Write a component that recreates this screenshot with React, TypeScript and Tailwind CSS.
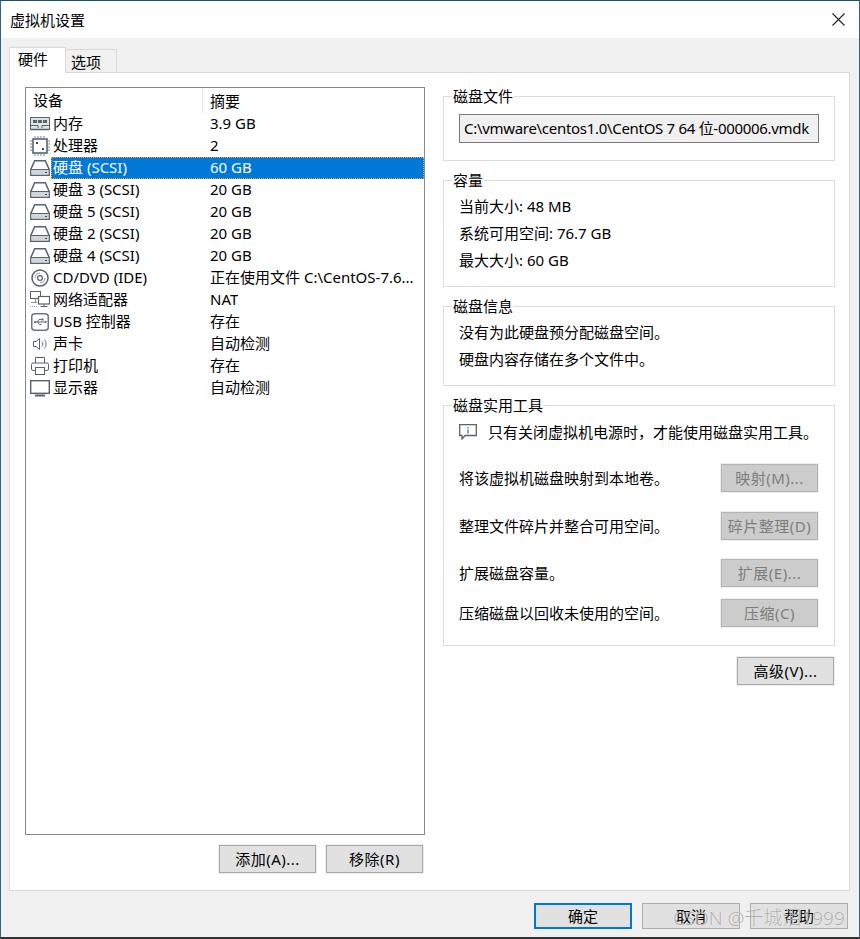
import React from 'react';

const font = "font-['Noto_Sans','Noto_Sans_CJK_SC',sans-serif]";

const MemoryIcon = () => (
    <svg width="20" height="14" viewBox="0 0 20 14" fill="none">
        <rect x="0.5" y="0.5" width="19" height="12" fill="#dfe3e6" stroke="#56646e" />
        <rect x="3" y="3" width="4" height="3" fill="#56646e" />
        <rect x="8" y="3" width="4" height="3" fill="#56646e" />
        <rect x="13" y="3" width="4" height="3" fill="#56646e" />
        <path d="M1 8.5H8V11M12 11V8.5H19" stroke="#56646e" />
        <path d="M1 12.5H19" stroke="#56646e" strokeWidth="1.5" />
    </svg>
);

const CpuIcon = () => (
    <svg width="20" height="20" viewBox="0 0 20 20" fill="none">
        <rect x="3" y="3" width="14" height="14" fill="#fff" stroke="#56646e" strokeWidth="1.6" />
        <path
            d="M5 0V2.5M8 0V2.5M11 0V2.5M14 0V2.5M5 17.5V20M8 17.5V20M11 17.5V20M14 17.5V20M0 5H2.5M0 8H2.5M0 11H2.5M0 14H2.5M17.5 5H20M17.5 8H20M17.5 11H20M17.5 14H20"
            stroke="#7a858e"
        />
        <rect x="6" y="6" width="2" height="2" fill="#3f4a54" />
        <rect x="12" y="12" width="2" height="2" fill="#3f4a54" />
    </svg>
);

const DiskIcon = () => (
    <svg width="20" height="16" viewBox="0 0 20 16" fill="none">
        <path d="M4.7 0.8H15.3L19.2 9.5V15.2H0.8V9.5Z" fill="#fff" stroke="#56646e" strokeWidth="1.5" />
        <rect x="1.5" y="10" width="17" height="4.5" fill="#cfd5da" />
        <path d="M1 9.5H19" stroke="#56646e" />
        <rect x="15" y="12" width="2" height="1" fill="#3f4a54" />
    </svg>
);

const CdIcon = () => (
    <svg width="18" height="18" viewBox="0 0 18 18" fill="none">
        <circle cx="9" cy="9" r="8" fill="#fff" stroke="#56646e" strokeWidth="1.5" />
        <circle cx="9" cy="9" r="2.4" stroke="#56646e" strokeWidth="1.2" />
        <path d="M4 9a5 5 0 0 1 5-5" stroke="#8f99a1" />
        <path d="M14 9a5 5 0 0 1-5 5" stroke="#8f99a1" />
    </svg>
);

const NetworkIcon = () => (
    <svg width="20" height="18" viewBox="0 0 20 18" fill="none">
        <rect x="0.5" y="0.5" width="10" height="7" fill="#fff" stroke="#56646e" />
        <rect x="8.5" y="5.5" width="11" height="7.5" fill="#fff" stroke="#56646e" strokeWidth="1.2" />
        <path d="M14 13V15M10.5 15.5H17.5" stroke="#56646e" />
        <path d="M5.5 8V11M1 11.5H7" stroke="#8a949c" />
        <path d="M0 15.5H8" stroke="#8a949c" strokeDasharray="1 1" />
    </svg>
);

const UsbIcon = () => (
    <svg width="18" height="18" viewBox="0 0 18 18" fill="none">
        <rect x="0.75" y="0.75" width="16.5" height="16.5" rx="3" fill="#fff" stroke="#6b7680" strokeWidth="1.5" />
        <path d="M3.5 9H14M6 9L8 6.5H10.5M6.5 9L8.5 11.5H10.5" stroke="#56646e" />
        <circle cx="4" cy="9" r="1" fill="#56646e" />
        <rect x="10.5" y="5.5" width="2" height="2" fill="#56646e" />
        <path d="M14 7.5V10.5L16 9Z" fill="#56646e" />
    </svg>
);

const SoundIcon = () => (
    <svg width="16" height="14" viewBox="0 0 16 14" fill="none">
        <path d="M1.5 4.5H4L7.5 1.5V12.5L4 9.5H1.5Z" fill="#fff" stroke="#56646e" />
        <path d="M10 4.5C11 6 11 8 10 9.5M12.5 2.5C14.5 5 14.5 9 12.5 11.5" stroke="#6b7680" />
    </svg>
);

const PrinterIcon = () => (
    <svg width="18" height="18" viewBox="0 0 18 18" fill="none">
        <path d="M4.5 6V0.5H13.5V6" fill="#fff" stroke="#56646e" />
        <rect x="0.5" y="6" width="17" height="7.5" rx="1.5" fill="#fff" stroke="#56646e" />
        <rect x="4.5" y="10.5" width="9" height="7" fill="#fff" stroke="#56646e" />
    </svg>
);

const MonitorIcon = () => (
    <svg width="20" height="17" viewBox="0 0 20 17" fill="none">
        <rect x="0.7" y="0.7" width="18.6" height="12.6" fill="#fff" stroke="#56646e" strokeWidth="1.4" />
        <path d="M5 15.5H15" stroke="#56646e" strokeWidth="2" />
    </svg>
);

const devices = [
    { icon: <MemoryIcon />, name: '内存', summary: '3.9 GB' },
    { icon: <CpuIcon />, name: '处理器', summary: '2' },
    { icon: <DiskIcon />, name: '硬盘 (SCSI)', summary: '60 GB', selected: true },
    { icon: <DiskIcon />, name: '硬盘 3 (SCSI)', summary: '20 GB' },
    { icon: <DiskIcon />, name: '硬盘 5 (SCSI)', summary: '20 GB' },
    { icon: <DiskIcon />, name: '硬盘 2 (SCSI)', summary: '20 GB' },
    { icon: <DiskIcon />, name: '硬盘 4 (SCSI)', summary: '20 GB' },
    { icon: <CdIcon />, name: 'CD/DVD (IDE)', summary: '正在使用文件 C:\\CentOS-7.6...' },
    { icon: <NetworkIcon />, name: '网络适配器', summary: 'NAT' },
    { icon: <UsbIcon />, name: 'USB 控制器', summary: '存在' },
    { icon: <SoundIcon />, name: '声卡', summary: '自动检测' },
    { icon: <PrinterIcon />, name: '打印机', summary: '存在' },
    { icon: <MonitorIcon />, name: '显示器', summary: '自动检测' },
];

const Group = ({ title, className, children }: { title: string; className: string; children?: React.ReactNode }) => (
    <div className={`relative border border-[#dcdcdc] ${className}`}>
        <span className="absolute left-[8px] top-[-10px] bg-white px-[1px] leading-[18px]">{title}</span>
        {children}
    </div>
);

const Button = ({ label }: { label: string }) => (
    <button className="m-[1px] flex h-[28px] w-[97px] items-center justify-center border border-[#a8a8a8] bg-[#e1e1e1] tracking-[0.5px] text-black outline-1 outline-[#eeeeee]">
        {label}
    </button>
);

const ToolButton = ({ label }: { label: string }) => (
    <button className="m-[1px] flex h-[28px] w-[97px] shrink-0 items-center justify-center border border-[#b5b5b5] bg-[#cccccc] tracking-[0.5px] text-[#7d7d7d] outline-1 outline-[#eeeeee]">
        {label}
    </button>
);

const ToolRow = ({ text, label, className }: { text: string; label: string; className: string }) => (
    <div className={`flex items-center justify-between ${className}`}>
        <span>{text}</span>
        <ToolButton label={label} />
    </div>
);

const App: React.FC = () => {
    return (
        <div className={`relative flex h-[939px] w-[860px] flex-col overflow-hidden border-x border-b-2 border-t border-x-[#2f6583] border-b-[#333333] border-t-[#1c4f6e] bg-[#f0f0f0] text-[15px] leading-[22px] text-black ${font}`}>
            <div className="flex h-[37px] shrink-0 items-center justify-between bg-white pl-[9px] pr-[14px]">
                <span>虚拟机设置</span>
                <svg width="13" height="13" viewBox="0 0 13 13" fill="none">
                    <path d="M0.5 0.5L12.5 12.5M12.5 0.5L0.5 12.5" stroke="#222" strokeWidth="1.1" />
                </svg>
            </div>

            <div className="flex shrink-0 items-end pl-[8px] pt-[9px]">
                <div className="z-10 mb-[-1px] h-[26px] w-[57px] border border-b-0 border-[#d9d9d9] bg-white pl-[8px] leading-[22px]">硬件</div>
                <div className="h-[23px] w-[51px] border border-b-0 border-l-0 border-[#d9d9d9] bg-[#f0f0f0] pl-[5px] leading-[24px]">选项</div>
            </div>

            <div className="ml-[8px] mr-[9px] flex h-[819px] shrink-0 gap-[18px] border border-[#d9d9d9] bg-white pl-[15px] pt-[14px]">
                <div className="flex w-[400px] shrink-0 flex-col">
                    <div className="h-[748px] border border-[#828790] bg-white">
                        <div className="flex h-[25px] items-center">
                            <div className="h-full w-[177px] border-r border-[#e5e5e5] pl-[7px] leading-[25px]">设备</div>
                            <div className="pl-[7px]">摘要</div>
                        </div>
                        {devices.map((d) => (
                            <div key={d.name} className="flex h-[22px] items-center">
                                <div className="flex w-[25px] shrink-0 justify-center pl-[2px]">{d.icon}</div>
                                <div className={`flex h-full min-w-0 flex-1 items-center ${d.selected ? 'bg-[#0078d7] text-white outline-1 -outline-offset-1 outline-dotted outline-[#f5a623]' : ''}`}>
                                    <span className="w-[159px] shrink-0 pb-[2px] pl-[2px]">{d.name}</span>
                                    <span className="truncate pb-[2px]">{d.summary}</span>
                                </div>
                            </div>
                        ))}
                    </div>
                    <div className="mt-[9px] flex justify-end gap-[8px] pr-[1px]">
                        <Button label="添加(A)..." />
                        <Button label="移除(R)" />
                    </div>
                </div>

                <div className="flex w-[392px] shrink-0 flex-col pt-[9px]">
                    <Group title="磁盘文件" className="h-[65px] shrink-0 px-[15px] pt-[17px]">
                        <div className="h-[29px] w-[360px] whitespace-nowrap border border-[#7a7a7a] bg-[#f0f0f0] pl-[4px] leading-[26px] tracking-[-0.3px]">
                            C:\vmware\centos1.0\CentOS 7 64 位-000006.vmdk
                        </div>
                    </Group>
                    <Group title="容量" className="mt-[19px] h-[107px] shrink-0 px-[15px] pt-[14px]">
                        <div className="flex flex-col gap-[5px]">
                            <div>当前大小: 48 MB</div>
                            <div>系统可用空间: 76.7 GB</div>
                            <div>最大大小: 60 GB</div>
                        </div>
                    </Group>
                    <Group title="磁盘信息" className="mt-[19px] h-[80px] shrink-0 px-[15px] pt-[14px]">
                        <div className="flex flex-col gap-[5px]">
                            <div>没有为此硬盘预分配磁盘空间。</div>
                            <div>硬盘内容存储在多个文件中。</div>
                        </div>
                    </Group>
                    <Group title="磁盘实用工具" className="mt-[19px] h-[241px] shrink-0 pl-[15px] pr-[15px] pt-[15px]">
                        <div className="flex items-center gap-[11px] whitespace-nowrap">
                            <svg width="18" height="16" viewBox="0 0 18 16" fill="none">
                                <path d="M0.7 0.7H17.3V11.5H6L3 15V11.5H0.7Z" fill="#fff" stroke="#56646e" strokeWidth="1.3" />
                                <path d="M9 3V4.5M9 5.5V9.5" stroke="#3f7fb5" strokeWidth="1.4" />
                            </svg>
                            <span>只有关闭虚拟机电源时，才能使用磁盘实用工具。</span>
                        </div>
                        <ToolRow text="将该虚拟机磁盘映射到本地卷。" label="映射(M)..." className="mt-[20px]" />
                        <ToolRow text="整理文件碎片并整合可用空间。" label="碎片整理(D)" className="mt-[18px]" />
                        <ToolRow text="扩展磁盘容量。" label="扩展(E)..." className="mt-[17px]" />
                        <ToolRow text="压缩磁盘以回收未使用的空间。" label="压缩(C)" className="mt-[10px]" />
                    </Group>
                    <div className="mt-[10px] flex justify-end">
                        <Button label="高级(V)..." />
                    </div>
                </div>
            </div>

            <div className="flex justify-end gap-[10px] pr-[11px] pt-[12px]">
                <button className="flex h-[26px] w-[98px] items-center justify-center border-2 border-[#0078d7] bg-[#e1e1e1]">确定</button>
                <button className="flex h-[26px] w-[98px] items-center justify-center border border-[#adadad] bg-[#e1e1e1]">取消</button>
                <button className="flex h-[26px] w-[98px] items-center justify-center border border-[#adadad] bg-[#e1e1e1]">帮助</button>
            </div>

            {/* watermark sits on top of the bottom buttons, same as the screenshot */}
            <span className="absolute left-[672px] top-[904px] whitespace-nowrap text-[19px] font-light leading-[26px] text-[#8c8c8c]/70 [text-shadow:0_0_1px_#ffffff]">
                CSDN @千城泪1999
            </span>
        </div>
    );
};

export default App;
